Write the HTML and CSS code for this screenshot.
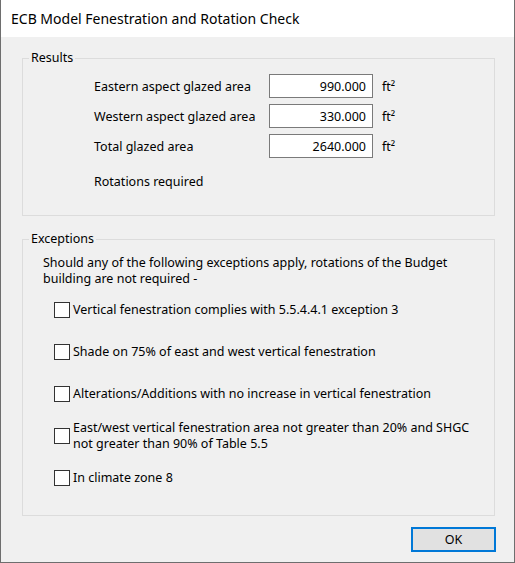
FILE: index.html
```html
<!DOCTYPE html>
<html lang="en">
<head>
  <meta charset="UTF-8">
  <title>ECB Model Fenestration and Rotation Check</title>
  <link rel="stylesheet" href="styles.css">
</head>
<body>
  <div class="dialog">
    <div class="title-bar">ECB Model Fenestration and Rotation Check</div>

    <div class="dialog-body">
      <fieldset class="group">
        <legend>Results</legend>
        <div class="results">
          <div class="result-grid">
            <label>Eastern aspect glazed area</label>
            <input class="value-box" type="text" value="990.000" readonly>
            <span class="unit">ft²</span>

            <label>Western aspect glazed area</label>
            <input class="value-box" type="text" value="330.000" readonly>
            <span class="unit">ft²</span>

            <label>Total glazed area</label>
            <input class="value-box" type="text" value="2640.000" readonly>
            <span class="unit">ft²</span>
          </div>
          <p class="status">Rotations required</p>
        </div>
      </fieldset>

      <fieldset class="group exceptions">
        <legend>Exceptions</legend>
        <div class="exception-body">
          <p class="note">Should any of the following exceptions apply, rotations of the Budget<br>building are not required -</p>
          <ul class="check-list">
            <li class="check-row"><span class="check-box"></span><span>Vertical fenestration complies with 5.5.4.4.1 exception 3</span></li>
            <li class="check-row"><span class="check-box"></span><span>Shade on 75% of east and west vertical fenestration</span></li>
            <li class="check-row"><span class="check-box"></span><span>Alterations/Additions with no increase in vertical fenestration</span></li>
            <li class="check-row"><span class="check-box"></span><span>East/west vertical fenestration area not greater than 20% and SHGC<br>not greater than 90% of Table 5.5</span></li>
            <li class="check-row"><span class="check-box"></span><span>In climate zone 8</span></li>
          </ul>
        </div>
      </fieldset>

      <div class="dialog-actions">
        <button class="ok-button" type="button">OK</button>
      </div>
    </div>
  </div>
</body>
</html>
```

FILE: styles.css
```css
* {
  margin: 0;
  padding: 0;
  box-sizing: border-box;
}

body {
  background: #ffffff;
  font-family: "Noto Sans", "Liberation Sans", sans-serif;
  font-size: 12.5px;
  color: #000000;
}

.dialog {
  width: 515px;
  height: 563px;
  display: flex;
  flex-direction: column;
  background: #f0f0f0;
  border: 1px solid #6e6e6e;
  border-top: none;
}

.title-bar {
  height: 37px;
  line-height: 37px;
  padding-left: 10px;
  background: #ffffff;
  font-size: 14px;
}

.dialog-body {
  padding: 13px 19px 0 21px;
}

/* group boxes */
.group {
  border: 1px solid #dcdcdc;
  padding: 0;
}

.group legend {
  margin-left: 6px;
  padding: 0 2px;
  line-height: 16px;
}

.exceptions {
  margin-top: 15px;
}

.results {
  padding: 8px 0 25px 71px;
}

.result-grid {
  display: grid;
  grid-template-columns: 175px 104px auto;
  grid-auto-rows: 24px;
  row-gap: 6px;
  align-items: center;
}

.value-box {
  width: 104px;
  height: 24px;
  border: 1px solid #7a7a7a;
  background: #ffffff;
  font: inherit;
  color: #000000;
  text-align: right;
  padding: 0 6px;
  outline: none;
}

.unit {
  margin-left: 9px;
}

.status {
  margin-top: 16px;
  line-height: 16px;
}

.exception-body {
  padding: 8px 0 16px 20px;
}

.note {
  line-height: 16px;
}

.check-list {
  list-style: none;
  margin: 2px 0 0 11px;
}

.check-row {
  height: 42px;
  display: flex;
  align-items: center;
  gap: 3px;
  line-height: 16px;
  white-space: nowrap;
}

.check-box {
  flex: none;
  width: 16px;
  height: 16px;
  border: 1px solid #333333;
  background: #ffffff;
}

.dialog-actions {
  display: flex;
  justify-content: flex-end;
  margin: 11px -1px 0 0;
}

.ok-button {
  width: 85px;
  height: 25px;
  border: 2px solid #0078d7;
  background: #e1e1e1;
  font: inherit;
  color: #000000;
}
```
